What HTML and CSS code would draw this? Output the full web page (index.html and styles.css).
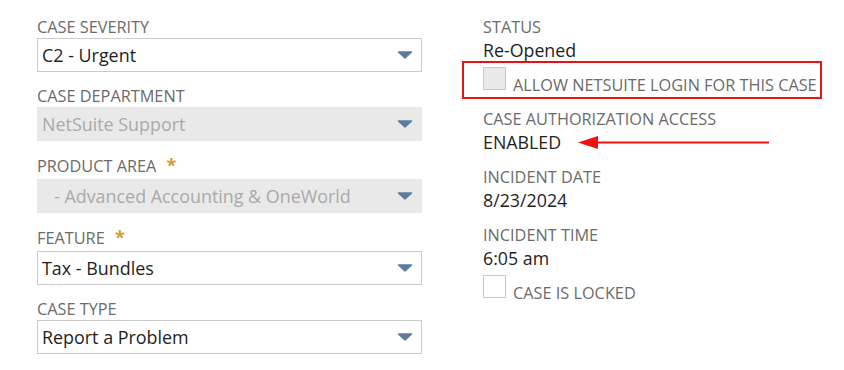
FILE: index.html
```html
<!DOCTYPE html>
<html lang="en">
<head>
    <meta charset="UTF-8">
    <meta name="viewport" content="width=device-width, initial-scale=1.0">
    <title>Case Details</title>
    <link rel="stylesheet" href="styles.css">
</head>
<body>
    <div class="case-form">
        <div class="col-left">
            <div class="field">
                <div class="field-label">Case Severity</div>
                <div class="select-box">
                    <span class="select-text">C2 - Urgent</span>
                    <svg class="select-arrow" width="16" height="8" viewBox="0 0 16 8"><path d="M1.5 1 H14.5 L8 7 Z" fill="#5d7b9e" stroke="#5d7b9e" stroke-width="1.5" stroke-linejoin="round"/></svg>
                </div>
            </div>
            <div class="field">
                <div class="field-label">Case Department</div>
                <div class="select-box disabled">
                    <span class="select-text">NetSuite Support</span>
                    <svg class="select-arrow" width="16" height="8" viewBox="0 0 16 8"><path d="M1.5 1 H14.5 L8 7 Z" fill="#5d7b9e" stroke="#5d7b9e" stroke-width="1.5" stroke-linejoin="round"/></svg>
                </div>
            </div>
            <div class="field">
                <div class="field-label required">Product Area <span class="req">*</span></div>
                <div class="select-box disabled">
                    <span class="select-text sub-option">- Advanced Accounting &amp; OneWorld</span>
                    <svg class="select-arrow" width="16" height="8" viewBox="0 0 16 8"><path d="M1.5 1 H14.5 L8 7 Z" fill="#5d7b9e" stroke="#5d7b9e" stroke-width="1.5" stroke-linejoin="round"/></svg>
                </div>
            </div>
            <div class="field">
                <div class="field-label required">Feature <span class="req">*</span></div>
                <div class="select-box">
                    <span class="select-text">Tax - Bundles</span>
                    <svg class="select-arrow" width="16" height="8" viewBox="0 0 16 8"><path d="M1.5 1 H14.5 L8 7 Z" fill="#5d7b9e" stroke="#5d7b9e" stroke-width="1.5" stroke-linejoin="round"/></svg>
                </div>
            </div>
            <div class="field">
                <div class="field-label">Case Type</div>
                <div class="select-box">
                    <span class="select-text">Report a Problem</span>
                    <svg class="select-arrow" width="16" height="8" viewBox="0 0 16 8"><path d="M1.5 1 H14.5 L8 7 Z" fill="#5d7b9e" stroke="#5d7b9e" stroke-width="1.5" stroke-linejoin="round"/></svg>
                </div>
            </div>
        </div>

        <div class="col-right">
            <div class="info-field">
                <div class="field-label">Status</div>
                <div class="info-value">Re-Opened</div>
            </div>
            <div class="check-row highlighted">
                <span class="checkbox disabled"></span>
                <span class="check-label">Allow NetSuite Login for this Case</span>
                <span class="annotation-box"></span>
            </div>
            <div class="info-field after-check">
                <div class="field-label">Case Authorization Access</div>
                <div class="info-value annotated">ENABLED
                    <svg class="annotation-arrow" width="192" height="13" viewBox="0 0 192 13"><path d="M0 6.5 L20 0 L20 13 Z" fill="#ee1111"/><rect x="19" y="5.5" width="172" height="2" fill="#ee1111"/></svg>
                </div>
            </div>
            <div class="info-field">
                <div class="field-label">Incident Date</div>
                <div class="info-value">8/23/2024</div>
            </div>
            <div class="info-field">
                <div class="field-label">Incident Time</div>
                <div class="info-value">6:05 am</div>
            </div>
            <div class="check-row">
                <span class="checkbox"></span>
                <span class="check-label">Case is Locked</span>
            </div>
        </div>
    </div>
</body>
</html>
```

FILE: styles.css
```css
body {
    margin: 0;
    background-color: #fff;
    font-family: "Open Sans", "DejaVu Sans", sans-serif;
    color: #222;
}

.case-form {
    display: flex;
    gap: 61px;
    padding: 17px 0 0 37px;
}

.col-left {
    width: 385px;
}

.field {
    margin-bottom: 14px;
}

.field-label {
    font-size: 16.3px;
    line-height: 20px;
    color: #6b6b6b;
    text-transform: uppercase;
    white-space: nowrap;
}

.field-label.required {
    line-height: 23px;
}

.req {
    color: #d39c2f;
    font-weight: bold;
    font-size: 18px;
    line-height: 0;
    margin-left: 6px;
}

.select-box {
    box-sizing: border-box;
    height: 34px;
    margin-top: 1px;
    border: 1px solid #cbcbcb;
    background-color: #fff;
    display: flex;
    align-items: center;
    justify-content: space-between;
    padding: 0 8px 0 4px;
}

.select-box.disabled {
    background-color: #e9e9e9;
    border-color: #e9e9e9;
}

.select-text {
    font-size: 17.9px;
    line-height: 22px;
    color: #1e1e1e;
}

.select-box.disabled .select-text {
    color: #a9a9a9;
}

.sub-option {
    padding-left: 12px;
}

.select-arrow {
    display: block;
}

/* right column */
.col-right {
    display: flex;
    flex-direction: column;
}

.info-field {
    margin-bottom: 14px;
}

.info-field:first-child {
    margin-bottom: 6px;
}

.info-field.after-check {
    margin-top: 14px;
}

.info-value {
    font-size: 17.8px;
    line-height: 22px;
    margin-top: 2px;
    color: #1e1e1e;
}

.check-row {
    display: flex;
    align-items: flex-start;
    gap: 7px;
}

.check-row:last-child {
    margin-top: -8px;
}

.checkbox {
    box-sizing: border-box;
    width: 23px;
    height: 23px;
    border: 1px solid #c8c8c8;
    background-color: #fff;
}

.checkbox.disabled {
    background-color: #e9e9e9;
}

.check-label {
    font-size: 16.3px;
    line-height: 20px;
    padding-top: 8px;
    color: #6b6b6b;
    text-transform: uppercase;
    white-space: nowrap;
}

/* red annotations drawn over the form */
.highlighted {
    position: relative;
}

.annotation-box {
    position: absolute;
    left: -21px;
    top: -6px;
    width: 360px;
    height: 38px;
    box-sizing: border-box;
    border: 2px solid #ee1111;
}

.annotated {
    position: relative;
}

.annotation-arrow {
    position: absolute;
    left: 95px;
    top: 5px;
}
```
